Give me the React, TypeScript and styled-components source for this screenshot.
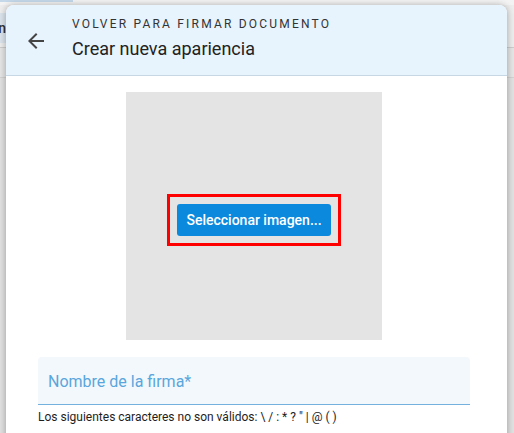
import styled, { createGlobalStyle } from "styled-components"

const GlobalStyle = createGlobalStyle`
  html, body {
    margin: 0;
    padding: 0;
    width: 514px;
    height: 433px;
    overflow: hidden;
    font-family: Roboto, "Liberation Sans", Arial, sans-serif;
  }
`

const Screen = styled.div`
  position: relative;
  width: 514px;
  height: 433px;
  overflow: hidden;
  background: #e2e2e2;
`

// page behind the dialog (dimmed)
const TopStrip = styled.div`
  height: 5px;
  background: #f3f3f3;
`

const TopTab = styled.div`
  width: 73px;
  height: 2px;
  background: #c4d8ea;
`

const Toolbar = styled.div`
  display: flex;
  align-items: center;
  height: 42px;
  background: #ededed;
  border-bottom: 1px solid #cdcdcd;
`

const ToolbarTab = styled.div`
  display: flex;
  align-items: center;
  justify-content: flex-end;
  width: 6px;
  height: 30px;
  margin-top: 4px;
  overflow: hidden;
  background: #dbe4ec;
  color: #333;
  font-size: 14px;
  font-weight: 500;
`

const SubBar = styled.div`
  height: 29px;
  background: #e6e6e6;
  border-bottom: 1px solid #d3d3d3;
`

// dialog
const Dialog = styled.div`
  position: absolute;
  left: 6px;
  top: 5px;
  width: 501px;
  height: 460px;
  display: flex;
  flex-direction: column;
  background: #fff;
  border-radius: 8px 8px 0 0;
  box-shadow: 0 0 6px rgba(0, 0, 0, 0.22), 0 2px 10px rgba(0, 0, 0, 0.12);
  overflow: hidden;
`

const Header = styled.div`
  display: flex;
  align-items: center;
  height: 70px;
  background: #e7f3fd;
  border-bottom: 1px solid #c7d7e4;
`

const BackButton = styled.button`
  display: flex;
  align-items: center;
  justify-content: center;
  width: 24px;
  height: 24px;
  margin: 2px 0 0 18px;
  padding: 0;
  border: none;
  background: none;
  color: #444;
`

const Titles = styled.div`
  display: flex;
  flex-direction: column;
  margin-left: 24px;
`

const Overline = styled.div`
  font-size: 12px;
  letter-spacing: 2.2px;
  color: #333;
  line-height: 16px;
  margin-top: -3px;
`

const Title = styled.div`
  font-size: 18px;
  color: #222;
  line-height: 24px;
  margin-top: 5px;
`

const Body = styled.div`
  display: flex;
  flex-direction: column;
  align-items: center;
  padding: 16px 37px 0 32px;
`

const Preview = styled.div`
  display: flex;
  align-items: center;
  justify-content: center;
  width: 256px;
  height: 248px;
  background: #e4e4e4;
`

const Highlight = styled.div`
  display: flex;
  margin-top: 8px;
  padding: 7px;
  border: 3px solid #ff0000;
`

const PickButton = styled.button`
  width: 154px;
  height: 32px;
  padding: 0;
  border: none;
  border-radius: 3px;
  background: #0b89dd;
  color: #fff;
  font-family: Roboto, "Liberation Sans", Arial, sans-serif;
  font-size: 14px;
  font-weight: 500;
`

const Field = styled.div`
  display: flex;
  align-items: center;
  align-self: stretch;
  height: 47px;
  margin-top: 17px;
  padding: 0 10px;
  background: #f3f8fd;
  border-radius: 4px 4px 0 0;
  border-bottom: 1px solid #74b1df;
`

const FieldLabel = styled.span`
  font-size: 16px;
  color: #5aa6dc;
  margin-top: 1px;
`

const Hint = styled.div`
  align-self: stretch;
  margin-top: 4px;
  font-size: 12px;
  line-height: 16px;
  color: #1e1e1e;
`

export default function App() {
  return (
    <Screen>
      <GlobalStyle />
      <TopStrip>
        <TopTab />
      </TopStrip>
      <Toolbar>
        <ToolbarTab>n</ToolbarTab>
      </Toolbar>
      <SubBar />

      <Dialog>
        <Header>
          <BackButton aria-label="Volver">
            <svg width="24" height="24" viewBox="0 0 24 24" fill="currentColor">
              <path d="M20 11H7.83l5.59-5.59L12 4l-8 8 8 8 1.41-1.41L7.83 13H20v-2z" />
            </svg>
          </BackButton>
          <Titles>
            <Overline>VOLVER PARA FIRMAR DOCUMENTO</Overline>
            <Title>Crear nueva apariencia</Title>
          </Titles>
        </Header>
        <Body>
          <Preview>
            <Highlight>
              <PickButton>Seleccionar imagen...</PickButton>
            </Highlight>
          </Preview>
          <Field>
            <FieldLabel>Nombre de la firma*</FieldLabel>
          </Field>
          <Hint>Los siguientes caracteres no son válidos: \ / : * ? " | @ ( )</Hint>
        </Body>
      </Dialog>
    </Screen>
  )
}
